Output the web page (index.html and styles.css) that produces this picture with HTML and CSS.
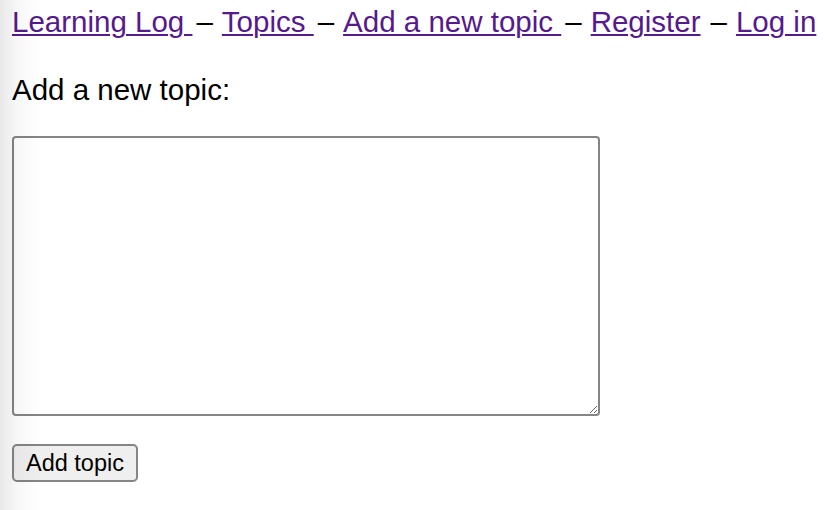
FILE: index.html
```html
<!DOCTYPE html>
<html lang="en">
<head>
<meta charset="utf-8">
<title>Learning Log</title>
<link rel="stylesheet" href="styles.css">
</head>
<body>
<nav class="nav"><a class="nav-link" href="#">Learning Log </a><span class="sep">–</span><a class="nav-link" href="#">Topics </a><span class="sep">–</span><a class="nav-link" href="#">Add a new topic </a><span class="sep">–</span><a class="nav-link" href="#">Register</a><span class="sep sep-wide">–</span><a class="nav-link" href="#">Log in</a></nav>
<p class="heading">Add a new topic:</p>
<form class="form">
  <textarea class="text" name="text"></textarea>
  <button class="btn" type="button">Add topic</button>
</form>
<div class="edge-shade"></div>
</body>
</html>
```
FILE: styles.css
```css
html, body {
  margin: 0;
  padding: 0;
  background: #fff;
}
body {
  padding: 0 12px;
  font-family: "Liberation Sans", Arial, sans-serif;
  color: #000;
}
.nav {
  font-size: 29.5px;
  line-height: 44px;
  white-space: nowrap;
}
.nav-link {
  color: #551a8b;
  text-decoration: underline;
  text-underline-offset: 2px;
  text-decoration-thickness: 2px;
}
.sep {
  margin: 0 9px 0 4px;
}
.sep-wide {
  margin-left: 10px;
}
.heading {
  margin: 24px 0 0;
  font-size: 29.5px;
  line-height: 44px;
}
.form {
  display: flex;
  flex-direction: column;
  align-items: flex-start;
  margin-top: 24px;
}
.text {
  box-sizing: border-box;
  width: 588px;
  height: 280px;
  margin: 0;
  border: 2px solid #858585;
  border-radius: 4px;
  background: #fff;
  resize: both;
}
.btn {
  box-sizing: border-box;
  margin-top: 28px;
  width: 126px;
  height: 38px;
  padding: 0;
  font-family: "Liberation Sans", Arial, sans-serif;
  font-size: 23.5px;
  color: #000;
  background: #efefef;
  border: 2px solid #858585;
  border-radius: 5px;
}
.edge-shade {
  position: fixed;
  left: 0;
  top: 0;
  bottom: 0;
  width: 42px;
  pointer-events: none;
  background: linear-gradient(to right, rgba(0,0,0,0.09), rgba(0,0,0,0.03) 40%, rgba(0,0,0,0));
}
```
